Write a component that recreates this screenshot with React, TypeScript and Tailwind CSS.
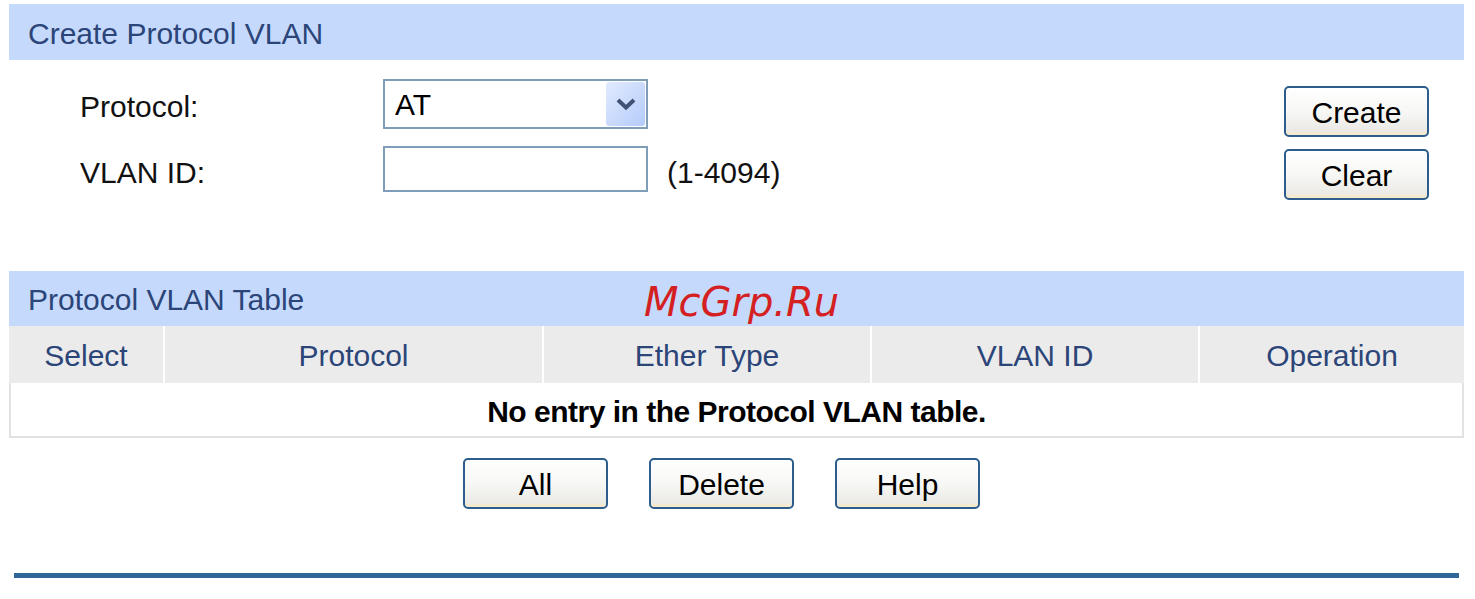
import React from 'react';

const font = { fontFamily: '"Liberation Sans", Arial, sans-serif' };

function XpButton({ children }: { children: React.ReactNode }) {
  return (
    <button className="relative h-[51px] w-[145px] rounded-[5px] border-2 border-[#2c5d8c] bg-gradient-to-b from-white via-[#f7f7f5] to-[#e8e7e2] pt-[3px] text-[30px] leading-none text-black shadow-[inset_0_-3px_0_#f5ead0]">
      {children}
    </button>
  );
}

const columns = [
  { label: 'Select', w: 'w-[154px]' },
  { label: 'Protocol', w: 'w-[379px]' },
  { label: 'Ether Type', w: 'w-[328px]' },
  { label: 'VLAN ID', w: 'w-[328px]' },
  { label: 'Operation', w: 'flex-1' },
];

export default function App() {
  const [protocol, setProtocol] = React.useState('AT');
  const [vlanId, setVlanId] = React.useState('');

  return (
    <div className="h-[599px] w-[1475px] overflow-hidden bg-white pt-[4px]" style={font}>
      {/* Create section */}
      <div className="mx-[9px] w-[1455px]">
        <div className="flex h-[56px] items-center bg-[#c5d9fc] pl-[19px] pt-[2px] text-[30px] text-[#2b4578]">
          Create Protocol VLAN
        </div>

        <div className="flex pt-[19px]">
          <div className="flex-1 pl-[71px]">
            <div className="flex h-[50px] items-center">
              <label className="w-[303px] pt-[4px] text-[30px] text-[#111]">Protocol:</label>
              <div className="relative h-[50px] w-[265px] border-2 border-[#7f9db9] bg-white">
                <select
                  value={protocol}
                  onChange={(e) => setProtocol(e.target.value)}
                  className="h-full w-full appearance-none bg-transparent pl-[10px] text-[30px] text-black outline-none"
                >
                  <option>AT</option>
                  <option>ARP</option>
                  <option>IP</option>
                  <option>IPX</option>
                </select>
                <span className="pointer-events-none absolute right-[1px] top-[1px] flex h-[44px] w-[39px] items-center justify-center rounded-[3px] bg-gradient-to-br from-[#e2ebfe] to-[#b4cbfa]">
                  <svg width="24" height="16" viewBox="0 0 24 16" className="shrink-0">
                    <path d="M4 4 L12 11.5 L20 4" fill="none" stroke="#3f5276" strokeWidth="4" />
                  </svg>
                </span>
              </div>
            </div>

            <div className="mt-[17px] flex h-[46px] items-center">
              <label className="w-[303px] pt-[6px] text-[30px] text-[#111]">VLAN ID:</label>
              <input
                value={vlanId}
                onChange={(e) => setVlanId(e.target.value)}
                className="h-[46px] w-[265px] border-2 border-[#7f9db9] bg-white px-2 text-[30px] outline-none"
              />
              <span className="ml-[19px] pt-[6px] text-[30px] text-[#111]">(1-4094)</span>
            </div>
          </div>

          <div className="mr-[35px] mt-[7px] flex flex-col gap-[12px]">
            <XpButton>Create</XpButton>
            <XpButton>Clear</XpButton>
          </div>
        </div>
      </div>

      {/* Table section */}
      <div className="mx-[9px] mt-[71px] w-[1455px]">
        <div className="relative flex h-[55px] items-center bg-[#c5d9fc] pl-[19px] pt-[2px] text-[30px] text-[#2b4578]">
          Protocol VLAN Table
          <span
            className="absolute left-[635px] top-[1px] text-[40px] italic text-[#d42020]"
            style={{ fontFamily: '"DejaVu Sans", sans-serif' }}
          >
            McGrp.Ru
          </span>
        </div>

        <div className="flex h-[57px] bg-[#ebebeb]">
          {columns.map((c, i) => (
            <div
              key={c.label}
              className={`${c.w} flex items-center justify-center pt-[2px] text-[30px] text-[#2b4578] ${i > 0 ? 'border-l-2 border-white' : ''}`}
            >
              {c.label}
            </div>
          ))}
        </div>

        <div className="flex h-[55px] items-center justify-center border-2 border-t-0 border-[#e2e2e2] bg-white pt-[3px] text-[30px] font-bold tracking-[-0.5px] text-black">
          No entry in the Protocol VLAN table.
        </div>
      </div>

      <div className="mt-[20px] flex justify-center gap-[41px] pr-[32px]">
        <XpButton>All</XpButton>
        <XpButton>Delete</XpButton>
        <XpButton>Help</XpButton>
      </div>

      <div className="mx-[14px] mt-[64px] h-[5px] w-[1445px] bg-[#2d6697]" />
    </div>
  );
}
